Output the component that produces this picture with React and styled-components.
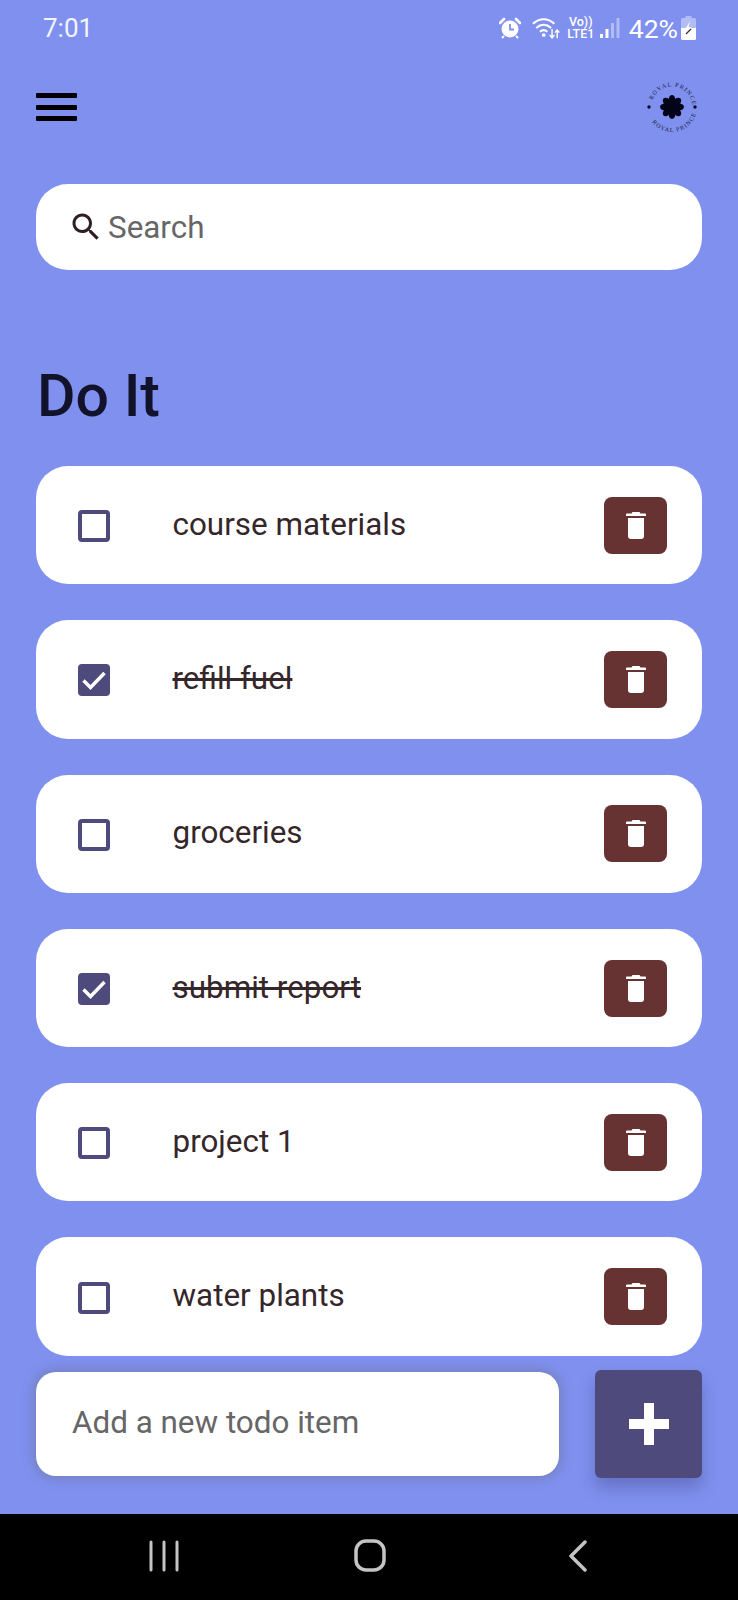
import React from 'react';
import styled, {createGlobalStyle} from 'styled-components';

const Global = createGlobalStyle`
  html, body {
    margin: 0;
    padding: 0;
    background: #7f90ef;
  }
  * { box-sizing: border-box; }
`;

const Screen = styled.div`
  width: 738px;
  height: 1600px;
  display: flex;
  flex-direction: column;
  background: #7f90ef;
  font-family: Roboto, "Liberation Sans", sans-serif;
  overflow: hidden;
`;

const StatusBar = styled.div`
  height: 56px;
  padding: 0 42px 0 43px;
  display: flex;
  align-items: center;
  justify-content: space-between;
  color: #fff;
`;

const Time = styled.span`
  font-size: 26px;
  color: #f2f4ff;
`;

const StatusIcons = styled.div`
  display: flex;
  align-items: center;
`;

const VoLte = styled.div`
  width: 28px;
  margin-left: 7px;
  display: flex;
  flex-direction: column;
  align-items: center;
  font-size: 12.5px;
  font-weight: 500;
  line-height: 12px;
`;

const Percent = styled.span`
  font-size: 26.5px;
  margin-left: 9px;
`;

const Header = styled.div`
  height: 104px;
  padding: 0 39px 0 36px;
  display: flex;
  align-items: center;
  justify-content: space-between;
  margin-top: -1px;
`;

const Hamburger = styled.div`
  width: 41px;
  height: 28px;
  display: flex;
  flex-direction: column;
  justify-content: space-between;

  span {
    display: block;
    height: 5px;
    background: #000;
    border-radius: 1px;
  }
`;

const SearchBox = styled.div`
  height: 86px;
  margin: 25px 36px 0;
  padding: 0 0 0 32px;
  display: flex;
  align-items: center;
  gap: 4px;
  background: #fff;
  border-radius: 32px;
  font-size: 31.4px;
  color: #666;
`;

const Title = styled.h1`
  margin: 91px 0 0 37px;
  height: 70px;
  line-height: 70px;
  font-size: 59px;
  font-weight: 500;
  color: #12132a;
`;

const List = styled.div`
  margin: 35px 36px 0;
  display: flex;
  flex-direction: column;
  gap: 36px;
`;

const Card = styled.div`
  height: 118.3px;
  padding: 0 35px 0 41.5px;
  display: flex;
  align-items: center;
  background: #fff;
  border-radius: 32px;
`;

const Check = styled.div`
  width: 32px;
  height: 32px;
  flex: none;
  margin-top: 2px;
  display: flex;
  align-items: center;
  justify-content: center;
  border: 4px solid #4f4a7c;
  border-radius: 4px;
  background: ${p => (p.$done ? '#4f4a7c' : 'transparent')};
`;

const Label = styled.span`
  margin-left: 63px;
  margin-bottom: 2px;
  flex: 1;
  font-size: 31.4px;
  color: #35262a;
  text-decoration: ${p => (p.$done ? 'line-through' : 'none')};
`;

const TrashButton = styled.div`
  width: 63px;
  height: 57px;
  display: flex;
  align-items: center;
  justify-content: center;
  background: #673232;
  border-radius: 8px;
`;

const AddRow = styled.div`
  margin: 14px 36px 0;
  display: flex;
  align-items: center;
  justify-content: space-between;
`;

const AddInput = styled.div`
  width: 523px;
  height: 104px;
  padding: 0 0 3px 36px;
  display: flex;
  align-items: center;
  background: #fff;
  border-radius: 20px;
  box-shadow: 0 0 12px 2px rgba(100, 100, 100, 0.4);
  font-size: 31.4px;
  color: #666;
`;

const AddButton = styled.div`
  width: 107px;
  height: 108px;
  display: flex;
  align-items: center;
  justify-content: center;
  background: #4f4a7c;
  border-radius: 6px;
  box-shadow: 0 10px 16px rgba(40, 40, 90, 0.28);
`;

const NavBar = styled.div`
  margin-top: auto;
  height: 86px;
  background: #000;
  display: flex;
  align-items: center;
  padding-bottom: 3px;
`;

const NavSlot = styled.div`
  display: flex;
  margin-left: ${p => p.$left}px;
`;

const todos = [
  {text: 'course materials', done: false},
  {text: 'refill fuel', done: true},
  {text: 'groceries', done: false},
  {text: 'submit report', done: true},
  {text: 'project 1', done: false},
  {text: 'water plants', done: false},
];

function AlarmIcon() {
  return (
    <svg width="22" height="22" viewBox="0 0 22 22">
      <circle cx="11" cy="12" r="8.5" fill="#fff" />
      <path d="M11 7v5.5h4" fill="none" stroke="#7f90ef" strokeWidth="1.8" />
      <path d="M1 6l4-4M21 6l-4-4" stroke="#fff" strokeWidth="2.6" strokeLinecap="round" />
      <path d="M5 19l-2 2M17 19l2 2" stroke="#fff" strokeWidth="2" />
    </svg>
  );
}

function WifiIcon() {
  return (
    <svg width="28" height="24" viewBox="0 0 30 24" fill="none" style={{marginLeft: 11}}>
      <path d="M1 7.5C8 1 17 1 24 7.5M4.5 12C9.5 7.5 15.5 7.5 20.5 12M8.5 16C11 13.8 14 13.8 16.5 16" stroke="#fff" strokeWidth="2.2" />
      <circle cx="12.5" cy="19.5" r="2" fill="#fff" />
      <path d="M21.5 13v9M19 19.5l2.5 3 2.5-3M27 23v-9M24.7 17l2.3-3 2.3 3" stroke="#fff" strokeWidth="1.5" />
    </svg>
  );
}

function SignalIcon() {
  return (
    <svg width="20" height="22" viewBox="0 0 20 22" style={{marginLeft: 5}}>
      <rect x="0" y="17" width="3" height="4" fill="#fff" />
      <rect x="5.5" y="12" width="3" height="9" fill="#fff" />
      <rect x="11" y="6" width="3" height="15" fill="#fff" fillOpacity="0.4" />
      <rect x="16.5" y="1" width="3" height="20" fill="#fff" fillOpacity="0.4" />
    </svg>
  );
}

function BatteryIcon() {
  return (
    <svg width="15" height="24" viewBox="0 0 15 24" style={{marginLeft: 3}}>
      <path d="M4.5 0h6v2h3a1.5 1.5 0 0 1 1.5 1.5V12H0V3.5A1.5 1.5 0 0 1 1.5 2h3z" fill="#fff" fillOpacity="0.4" />
      <path d="M0 12h15v10.5a1.5 1.5 0 0 1-1.5 1.5h-12A1.5 1.5 0 0 1 0 22.5z" fill="#fff" />
      <path d="M9 5L5 12h3l-2 6 4-7H7.5z" fill="#fff" />
      <path d="M5 18l5-5" stroke="#333" strokeWidth="1.2" />
    </svg>
  );
}

function Logo() {
  return (
    <svg width="54" height="54" viewBox="0 0 54 54">
      <defs>
        <path id="logoTop" d="M6.5 27a20.5 20.5 0 0 1 41 0" />
        <path id="logoBottom" d="M2 27a25 25 0 0 0 50 0" />
      </defs>
      <text fontFamily="Liberation Serif, serif" fontSize="6" letterSpacing="1.1" fill="#1a1a3a">
        <textPath href="#logoTop" startOffset="7">ROYAL PRINCE</textPath>
      </text>
      <text fontFamily="Liberation Serif, serif" fontSize="6" letterSpacing="1.1" fill="#1a1a3a">
        <textPath href="#logoBottom" startOffset="16">ROYAL PRINCE</textPath>
      </text>
      <circle cx="4" cy="27" r="1.7" fill="#0a0a20" />
      <circle cx="50" cy="27" r="1.7" fill="#0a0a20" />
      <g fill="#05051a">
        <circle cx="27" cy="27" r="7" />
        {[0, 45, 90, 135, 180, 225, 270, 315].map(a => (
          <ellipse key={a} cx="27" cy="20" rx="3.4" ry="5" transform={`rotate(${a} 27 27)`} />
        ))}
      </g>
    </svg>
  );
}

function SearchIcon() {
  return (
    <svg width="36" height="36" viewBox="0 0 24 24" fill="#2f1f22">
      <path d="M15.5 14h-.79l-.28-.27C15.41 12.59 16 11.11 16 9.5 16 5.91 13.09 3 9.5 3S3 5.91 3 9.5 5.91 16 9.5 16c1.61 0 3.09-.59 4.23-1.57l.27.28v.79l5 4.99L20.49 19l-4.99-5zm-6 0C7.01 14 5 11.99 5 9.5S7.01 5 9.5 5 14 7.01 14 9.5 11.99 14 9.5 14z" />
    </svg>
  );
}

function TrashIcon() {
  return (
    <svg width="20" height="27" viewBox="0 0 20 27" fill="#fff">
      <path d="M6.5 0h7l1 1.5H19a1 1 0 0 1 1 1V4H0V2.5a1 1 0 0 1 1-1h4.5z" />
      <path d="M2 6h16v18a3 3 0 0 1-3 3H5a3 3 0 0 1-3-3z" />
    </svg>
  );
}

function CheckMark() {
  return (
    <svg width="24" height="24" viewBox="0 0 24 24" fill="none">
      <path d="M1.5 12.5L8.5 19.5L22.5 5" stroke="#fff" strokeWidth="3.4" />
    </svg>
  );
}

function PlusIcon() {
  return (
    <svg width="40" height="42" viewBox="0 0 40 42" fill="#fff">
      <path d="M15 0h10v16h15v10H25v16H15V26H0V16h15z" />
    </svg>
  );
}

function App() {
  return (
    <Screen>
      <Global />

      {/* android status bar */}
      <StatusBar>
        <Time>7:01</Time>
        <StatusIcons>
          <AlarmIcon />
          <WifiIcon />
          <VoLte>
            <span>Vo))</span>
            <span>LTE1</span>
          </VoLte>
          <SignalIcon />
          <Percent>42%</Percent>
          <BatteryIcon />
        </StatusIcons>
      </StatusBar>

      <Header>
        <Hamburger>
          <span /><span /><span />
        </Hamburger>
        <Logo />
      </Header>

      <SearchBox>
        <SearchIcon />
        Search
      </SearchBox>

      <Title>Do It</Title>

      <List>
        {todos.map(todo => (
          <Card key={todo.text}>
            <Check $done={todo.done}>{todo.done && <CheckMark />}</Check>
            <Label $done={todo.done}>{todo.text}</Label>
            <TrashButton><TrashIcon /></TrashButton>
          </Card>
        ))}
      </List>

      <AddRow>
        <AddInput>Add a new todo item</AddInput>
        <AddButton><PlusIcon /></AddButton>
      </AddRow>

      {/* android nav buttons */}
      <NavBar>
        <NavSlot $left={149}>
          <svg width="30" height="32" viewBox="0 0 30 32" fill="none" stroke="#c4c4c4" strokeWidth="3" strokeLinecap="round">
            <path d="M2 2v28M15 2v28M28 2v28" />
          </svg>
        </NavSlot>
        <NavSlot $left={175}>
          <svg width="32" height="33" viewBox="0 0 32 33" fill="none" stroke="#c4c4c4" strokeWidth="3.5">
            <rect x="2" y="2" width="28" height="29" rx="10" />
          </svg>
        </NavSlot>
        <NavSlot $left={182}>
          <svg width="20" height="32" viewBox="0 0 20 32" fill="none" stroke="#c4c4c4" strokeWidth="3.5" strokeLinecap="round" strokeLinejoin="round">
            <path d="M17 2L3 16l14 14" />
          </svg>
        </NavSlot>
      </NavBar>
    </Screen>
  );
}

export default App;
